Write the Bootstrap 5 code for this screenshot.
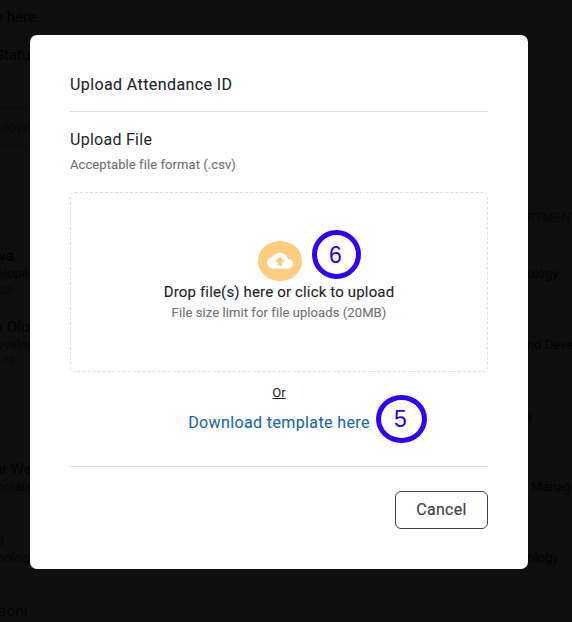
<!DOCTYPE html>
<html lang="en">
<head>
<meta charset="utf-8">
<meta name="viewport" content="width=device-width, initial-scale=1">
<title>Upload Attendance ID</title>
<link href="https://cdn.jsdelivr.net/npm/bootstrap@5.3.0/dist/css/bootstrap.min.css" rel="stylesheet">
<style>
body{font-family:Roboto,"Liberation Sans",sans-serif;background:#0f0f0f;color:#212529;width:572px;height:622px}
.page{height:622px;color:#020202;white-space:nowrap;font-size:13px;line-height:18px}
.intro{height:107px;font-size:15px}
.intro div{height:38px;padding-top:8px;text-indent:-5px}
.search{height:39px;border-top:1px solid #090909;border-bottom:1px solid #090909;width:34px;color:#070707;font-size:14px;padding-top:10px;text-indent:-3px}
.thead-row{height:39px;margin-top:52px;border-top:1px solid #0c0c0c;color:#02060d;font-size:13px;padding-top:10px}
.data-row{height:71px;border-top:1px solid #0d0d0d;padding-top:9px}
.data-row:last-child{height:30px}
.side{width:34px}
.person{font-size:15.5px;text-indent:-6px}
.person.short{text-indent:-4px}
.data-row:last-child .person{text-indent:-2px}
.code{font-size:11px;line-height:16px;color:#050505}
.role{color:#040404;text-indent:-3px}
.dept{width:45px;padding-top:18px}
.dialog{left:30px;top:35px;width:498px;height:534px;border-radius:7px;padding:40px 40px 0}
.title{font-size:16px;line-height:20px;height:37px;border-bottom:1px solid #d8dfec;letter-spacing:.4px;-webkit-text-stroke:.1px}
.heading{font-size:16px;line-height:20px;margin-top:18px;letter-spacing:.27px}
.hint{font-size:13px;line-height:18px;color:#757575;letter-spacing:.08px;-webkit-text-stroke:.15px}
.format{margin-top:6px}
.dropzone{height:180px;margin-top:18px;border:1px dashed #dcdee1;border-radius:5px;padding-top:48px}
.cloud{width:44px;height:40px;margin-left:1px}
.drop-label{font-size:15px;line-height:20px;margin-top:1px;letter-spacing:.16px;-webkit-text-stroke:.1px}
.limit{margin-top:2px;letter-spacing:.09px}
.or{font-size:13px;line-height:18px;margin-top:12px}
.template{font-size:16px;line-height:22px;color:#1768b5;margin-top:10px;letter-spacing:.38px;-webkit-text-stroke:.1px}
.footer{margin-top:32px;border-top:1px solid #d3e2f4;padding-top:24px}
.cancel{width:93px;height:38px;border:1px solid #444;border-radius:6px;color:#444;font-size:16px;padding:0;letter-spacing:.3px;-webkit-text-stroke:.2px}
.step{border:5px solid #3200fa;border-radius:50%;color:#3200fa;font:23px "Liberation Sans",sans-serif}
.step-six{left:282px;top:195px;width:49px;height:49px;padding:1px 2px 0 0}
.step-five{left:346px;top:360px;width:51px;height:48px;padding-right:2px}
</style>
</head>
<body class="m-0 overflow-hidden position-relative">
<div class="page overflow-hidden" aria-hidden="true">
  <div class="intro"><div>n here.</div><div>Status</div></div>
  <div class="search">ployee</div>
  <div class="thead-row d-flex justify-content-end"><span class="dept p-0">RTMENT</span></div>
  <div class="data-row d-flex justify-content-between"><div class="side"><div class="person">wa</div><div class="role">eloper</div><div class="code">28</div></div><div class="dept">ology</div></div>
  <div class="data-row d-flex justify-content-between"><div class="side"><div class="person">o Olo</div><div class="role">evelop</div><div class="code">-19</div></div><div class="dept">nd Deve</div></div>
  <div class="data-row d-flex justify-content-between"><div class="side"></div><div class="dept">y</div></div>
  <div class="data-row d-flex justify-content-between"><div class="side"><div class="person">ni Wa</div><div class="role">ociate</div></div><div class="dept ps-1">Manag</div></div>
  <div class="data-row d-flex justify-content-between"><div class="side"><div class="person short">a</div><div class="role">nolog</div></div><div class="dept">ology</div></div>
  <div class="data-row"><div class="person">aoni</div></div>
</div>
<main class="dialog bg-white position-absolute" role="dialog">
  <div class="title">Upload Attendance ID</div>
  <div class="heading">Upload File</div>
  <div class="hint format">Acceptable file format (.csv)</div>
  <div class="dropzone d-flex flex-column align-items-center">
    <svg class="cloud" viewBox="0 0 44 40"><ellipse cx="22" cy="20" rx="22" ry="20" fill="#ffcc80"/><path transform="translate(9 7.7) scale(1.08 1)" fill="#fff" d="M19.35 10.04C18.67 6.59 15.64 4 12 4 9.11 4 6.6 5.64 5.35 8.04 2.34 8.36 0 10.91 0 14c0 3.31 2.69 6 6 6h13c2.76 0 5-2.24 5-5 0-2.64-2.05-4.78-4.65-4.96zM14 13v4h-4v-4H7l5-5 5 5h-3z"/></svg>
    <div class="drop-label">Drop file(s) here or click to upload</div>
    <div class="hint limit">File size limit for file uploads (20MB)</div>
  </div>
  <div class="or text-center text-decoration-underline">Or</div>
  <div class="template text-center">Download template here</div>
  <div class="footer d-flex justify-content-end"><button class="cancel btn" type="button">Cancel</button></div>
  <div class="step step-six position-absolute d-flex align-items-center justify-content-center">6</div>
  <div class="step step-five position-absolute d-flex align-items-center justify-content-center">5</div>
</main>
<script src="https://cdn.jsdelivr.net/npm/bootstrap@5.3.0/dist/js/bootstrap.bundle.min.js"></script>
</body>
</html>
